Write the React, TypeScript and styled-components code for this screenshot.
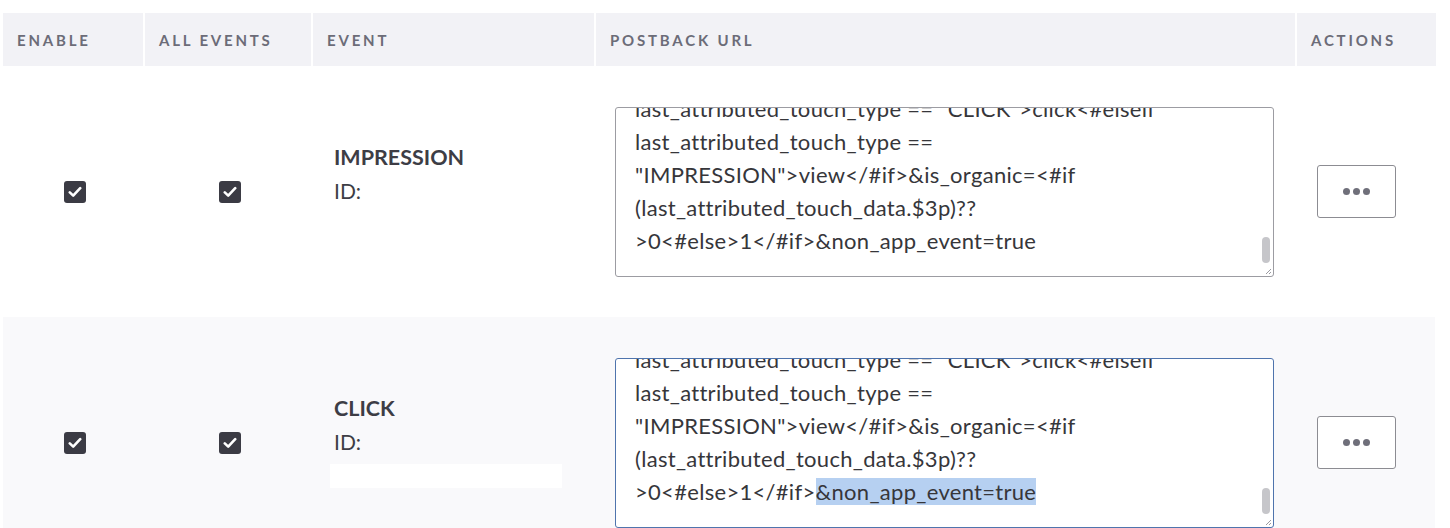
import React from "react";
import styled, { createGlobalStyle } from "styled-components";

const Global = createGlobalStyle`
  html, body { margin: 0; padding: 0; background: #ffffff; }
  body { font-family: Lato, "Open Sans", "Liberation Sans", sans-serif; color: #3a3a42; }
`;

const COLS = "140px 166px 281px 699px 139px";

const Table = styled.div`
  width: 1432px;
  margin: 13px 0 0 3px;
`;

const HeaderRow = styled.div`
  display: grid;
  grid-template-columns: ${COLS};
  column-gap: 2px;
  height: 53px;
`;

const HeaderCell = styled.div`
  background: #f2f2f6;
  display: flex;
  align-items: center;
  padding-left: 14px;
  font-size: 15px;
  font-weight: 700;
  letter-spacing: 2.8px;
  color: #6c6c78;
  text-transform: uppercase;
`;

const Row = styled.div<{ $shade?: boolean }>`
  display: grid;
  grid-template-columns: ${COLS};
  column-gap: 2px;
  height: 251px;
  background: ${(p) => (p.$shade ? "#f9f9fb" : "#ffffff")};
`;

const CenterCell = styled.div`
  display: flex;
  align-items: center;
  justify-content: center;
  padding-left: 4px;
`;

const Check = styled.span`
  width: 22px;
  height: 22px;
  border-radius: 3px;
  background: #3b3b44;
  display: inline-flex;
  align-items: center;
  justify-content: center;
`;

const EventCell = styled.div`
  display: flex;
  flex-direction: column;
  justify-content: center;
  padding: 0 0 6px 21px;
`;

const EventName = styled.div`
  font-size: 21.5px;
  font-weight: 700;
  line-height: 34px;
  color: #3d3d45;
`;

const EventId = styled.div`
  font-size: 21px;
  line-height: 34px;
  color: #3d3d45;
`;

const Redacted = styled.div`
  margin: 5px 0 0 -4px;
  width: 232px;
  height: 24px;
  background: #ffffff;
`;

const UrlCell = styled.div`
  display: flex;
  align-items: center;
  padding-left: 19px;
`;

const TextBox = styled.div<{ $focused?: boolean }>`
  position: relative;
  width: 659px;
  height: 170px;
  box-sizing: border-box;
  border: 1px solid ${(p) => (p.$focused ? "#4f74ad" : "#9c9ca2")};
  border-radius: 3px;
  background: #ffffff;
  overflow: hidden;
`;

const TextContent = styled.div`
  margin-top: -16px;
  padding: 0 19px;
  font-size: 22px;
  letter-spacing: 0.3px;
  color: #36363a;
`;

const Line = styled.div`
  height: 33px;
  line-height: 33px;
  white-space: nowrap;
`;

const Selected = styled.span`
  background: #b6d0f1;
`;

const ScrollThumb = styled.div`
  position: absolute;
  right: 3px;
  top: 129px;
  width: 8px;
  height: 26px;
  border-radius: 4px;
  background: #c6c6ca;
`;

const Grip = styled.svg`
  position: absolute;
  right: 1px;
  bottom: 1px;
  width: 9px;
  height: 9px;
`;

const ActionCell = styled.div`
  display: flex;
  align-items: center;
  padding-left: 20px;
`;

const MoreButton = styled.button`
  width: 79px;
  height: 53px;
  box-sizing: border-box;
  border: 1px solid #8c8c92;
  border-radius: 3px;
  background: #ffffff;
  display: flex;
  align-items: center;
  justify-content: center;
  gap: 3px;
  padding: 0;
`;

const Dot = styled.span`
  width: 7px;
  height: 7px;
  border-radius: 50%;
  background: #6f6f7a;
`;

const CheckBox = () => (
  <Check>
    <svg width="14" height="12" viewBox="0 0 14 12">
      <path d="M1.8 6.4 L5.2 9.6 L12.2 2.2" fill="none" stroke="#ffffff" strokeWidth="2.6" strokeLinecap="round" strokeLinejoin="round" />
    </svg>
  </Check>
);

const rows = [
  { name: "IMPRESSION", focused: false },
  { name: "CLICK", focused: true },
];

export default function App() {
  return (
    <>
      <Global />
      <Table>
        <HeaderRow>
          <HeaderCell>Enable</HeaderCell>
          <HeaderCell>All Events</HeaderCell>
          <HeaderCell>Event</HeaderCell>
          <HeaderCell>Postback URL</HeaderCell>
          <HeaderCell>Actions</HeaderCell>
        </HeaderRow>
        {rows.map((r, i) => (
          <Row key={r.name} $shade={i % 2 === 1}>
            <CenterCell>
              <CheckBox />
            </CenterCell>
            <CenterCell>
              <CheckBox />
            </CenterCell>
            <EventCell>
              <EventName>{r.name}</EventName>
              <EventId>ID:</EventId>
              <Redacted />
            </EventCell>
            <UrlCell>
              <TextBox $focused={r.focused}>
                <TextContent>
                  <Line>{'last_attributed_touch_type == "CLICK">click<#elseif'}</Line>
                  <Line>{"last_attributed_touch_type =="}</Line>
                  <Line>{'"IMPRESSION">view</#if>&is_organic=<#if'}</Line>
                  <Line>{"(last_attributed_touch_data.$3p)??"}</Line>
                  <Line>
                    {">0<#else>1</#if>"}
                    {r.focused ? <Selected>{"&non_app_event=true"}</Selected> : "&non_app_event=true"}
                  </Line>
                </TextContent>
                <ScrollThumb />
                <Grip viewBox="0 0 9 9">
                  <path d="M8 3 L3 8 M8 6 L6 8" stroke="#9a9aa0" strokeWidth="1" />
                </Grip>
              </TextBox>
            </UrlCell>
            <ActionCell>
              <MoreButton aria-label="More actions">
                <Dot />
                <Dot />
                <Dot />
              </MoreButton>
            </ActionCell>
          </Row>
        ))}
      </Table>
    </>
  );
}
